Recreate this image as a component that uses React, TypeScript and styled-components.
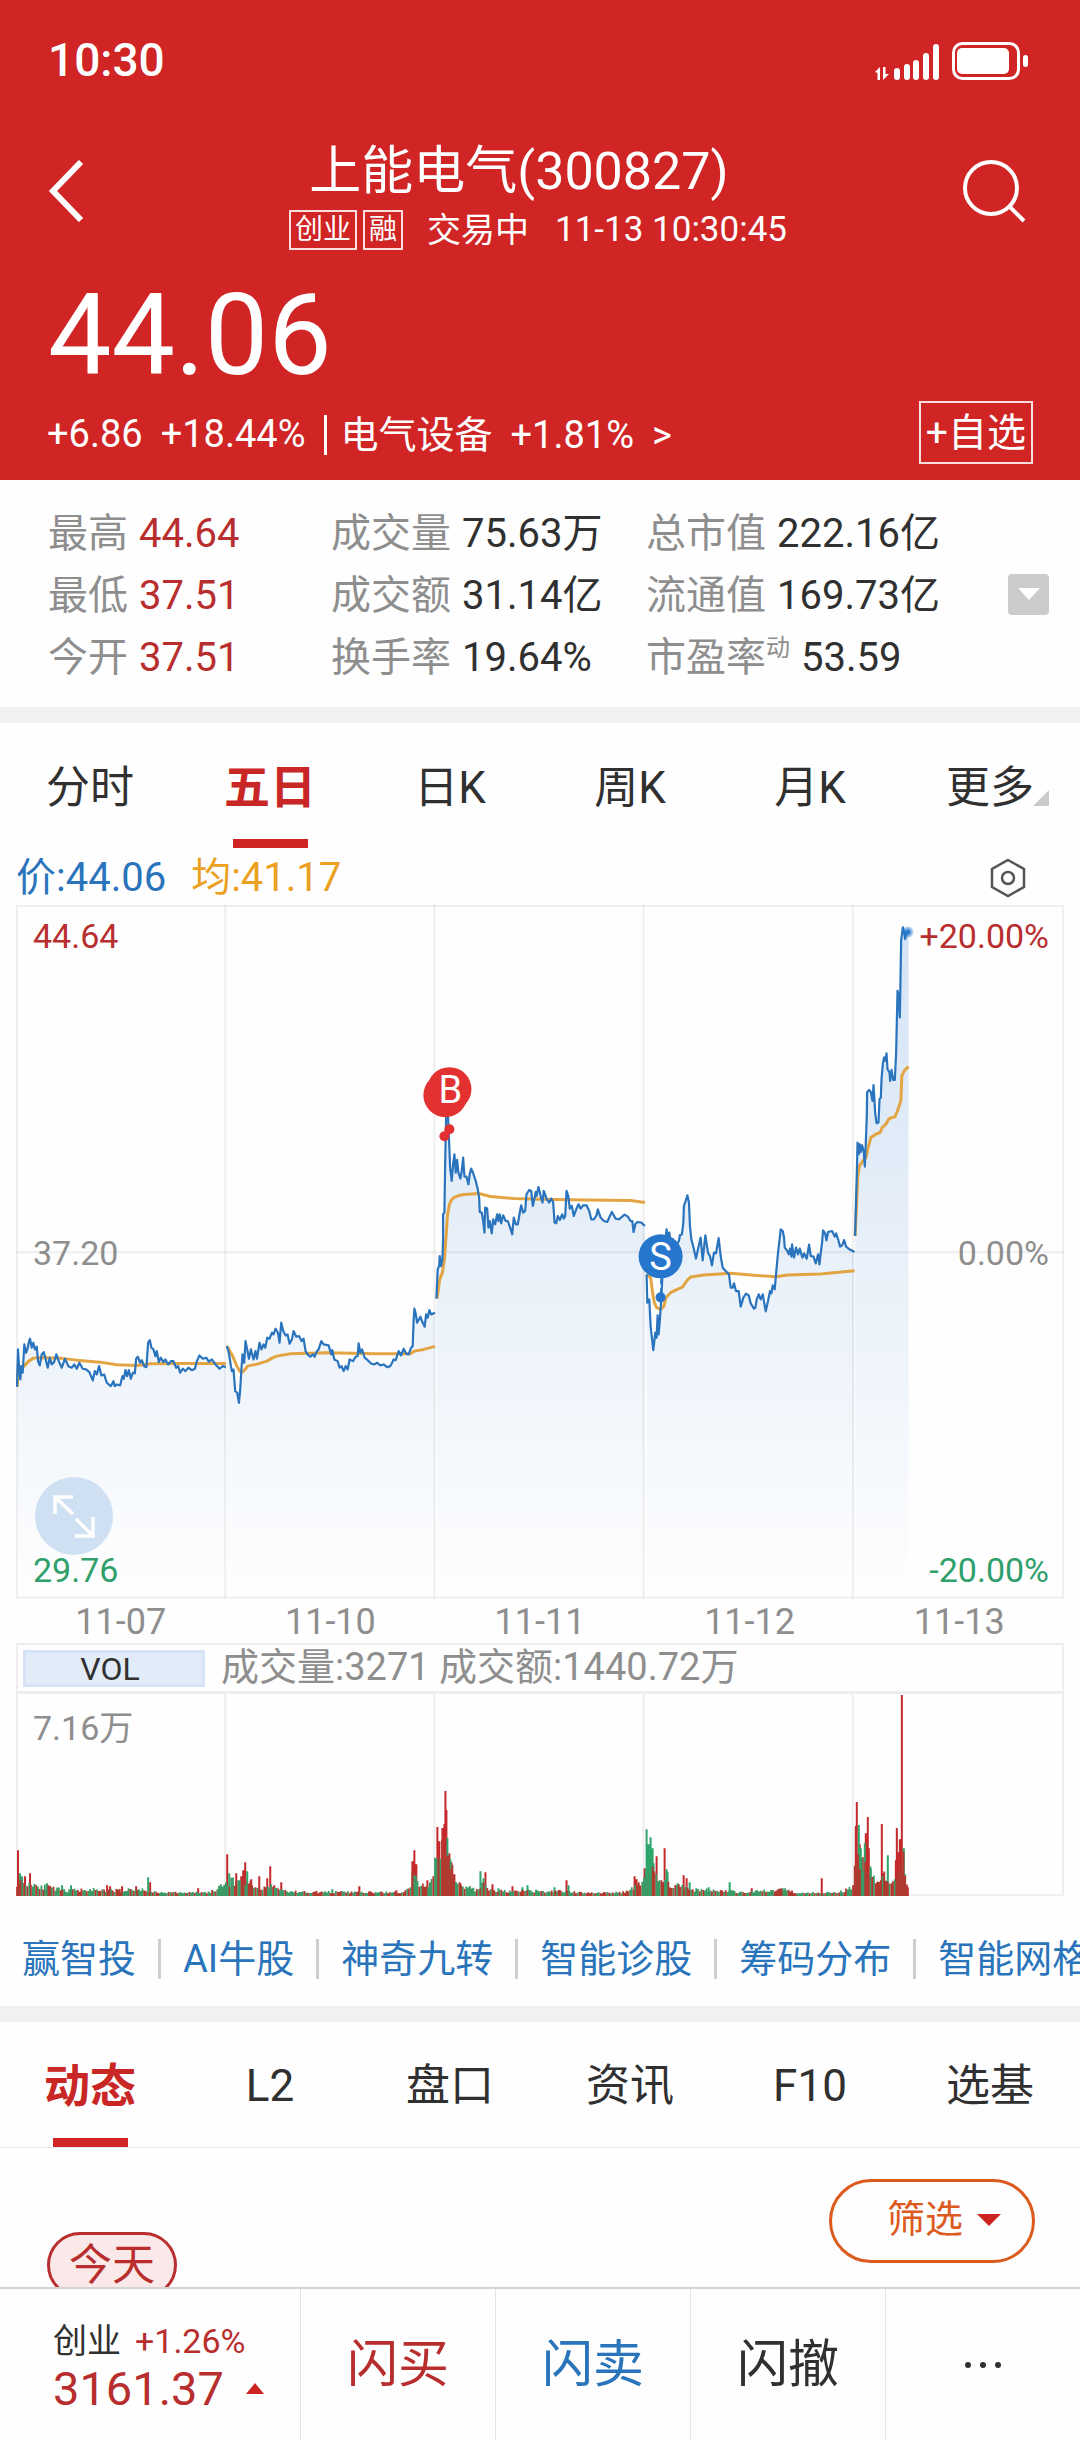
import React from 'react';
import styled, { createGlobalStyle } from 'styled-components';

const RED = '#d02425';
const DEEP_RED = '#b82e2e';
const BLUE = '#2a74bb';
const INK = '#303030';
const GREY = '#8e8e8e';
const LINE = '#eeeeee';

const GlobalStyle = createGlobalStyle`
  * { box-sizing: border-box; }
  body {
    margin: 0;
    background: #fefefe;
    color: ${INK};
    font-family: Roboto, "Noto Sans CJK SC", sans-serif;
    font-size: 40px;
    line-height: 1.2;
  }
  button {
    margin: 0;
    padding: 0;
    border: 0;
    background: none;
    color: inherit;
    font: inherit;
    cursor: pointer;
  }
  a { color: inherit; text-decoration: none; }
`;

const Screen = styled.div`
  display: flex;
  flex-direction: column;
  height: 100vh;
`;

const Scroll = styled.main`
  flex: 1;
  min-height: 0;
  overflow-x: hidden;
  overflow-y: auto;
  scrollbar-width: none;
`;

/* ---------- header ---------- */

const Header = styled.header`
  background: ${RED};
  color: #fff;
  padding-bottom: 16px;
`;

const StatusBar = styled.div`
  display: flex;
  align-items: center;
  justify-content: space-between;
  height: 122px;
  padding: 0 50px 0 48px;
  font-size: 46px;
  font-weight: 500;
`;

const TitleBar = styled.div`
  display: grid;
  grid-template-columns: 1fr auto 1fr;
  align-items: center;
  padding: 20px 52px 8px 48px;
`;

const IconButton = styled.button<{ $end?: boolean }>`
  display: flex;
  justify-self: ${p => (p.$end ? 'end' : 'start')};
  padding-bottom: 10px;
`;

const TitleBlock = styled.div`
  display: flex;
  flex-direction: column;
  gap: 8px;
`;

const Title = styled.h1`
  margin: 0;
  padding-right: 38px;
  font-size: 52px;
  font-weight: 400;
  line-height: 60px;
  text-align: center;
`;

const SubTitle = styled.div`
  display: flex;
  align-items: center;
  gap: 6px;
  font-size: 34px;
  line-height: 40px;
`;

const Badge = styled.span`
  border: 2px solid rgba(255, 255, 255, 0.85);
  padding: 0 4px;
  font-size: 28px;
  line-height: 36px;
`;

const Phase = styled.span`
  margin-left: 18px;
`;

const Clock = styled.time`
  margin-left: 20px;
  font-size: 35px;
`;

const Price = styled.div`
  margin-top: 18px;
  padding: 0 48px;
  font-size: 113px;
  line-height: 120px;
`;

const ChangeRow = styled.div`
  display: flex;
  align-items: center;
  justify-content: space-between;
  margin-top: 5px;
  padding: 0 47px;
  font-size: 38px;
`;

const Changes = styled.div`
  display: flex;
  align-items: center;
  gap: 18px;
  padding-top: 4px;
`;

const Sector = styled.a`
  display: flex;
  gap: 18px;
  padding-left: 14px;
  border-left: 3px solid #fff;
  line-height: 40px;
`;

const WatchButton = styled.button`
  height: 63px;
  padding: 0 5px;
  border: 2px solid rgba(255, 255, 255, 0.85);
  font-size: 39px;
  line-height: 60px;
`;

/* ---------- key figures ---------- */

const Figures = styled.section`
  display: flex;
  align-items: center;
  padding: 19px 31px 18px 48px;
`;

const FigureGrid = styled.dl`
  flex: 1;
  display: grid;
  grid-template-columns: 283fr 315fr 362fr;
  grid-auto-rows: 62px;
  margin: 0;
  padding-top: 4px;
`;

const Figure = styled.div`
  display: flex;
  align-items: center;
  white-space: nowrap;
`;

const FigureName = styled.dt`
  display: flex;
  margin-right: 11px;
  color: ${GREY};
`;

const Superscript = styled.span`
  font-size: 24px;
  line-height: 28px;
`;

const FigureValue = styled.dd<{ $up?: boolean }>`
  margin: 0;
  color: ${p => (p.$up ? DEEP_RED : INK)};
`;

const ExpandButton = styled.button`
  display: flex;
  align-items: center;
  justify-content: center;
  width: 41px;
  height: 41px;
  border-radius: 4px;
  background: #cbcbcb;
`;

const Divider = styled.div`
  height: 16px;
  background: #f1f1f1;
`;

/* ---------- tabs ---------- */

const TabBar = styled.nav<{ $ruled?: boolean }>`
  display: grid;
  grid-template-columns: repeat(6, 1fr);
  height: ${p => (p.$ruled ? 126 : 125)}px;
  border-bottom: ${p => (p.$ruled ? `1px solid #e8e8e8` : '0')};
`;

const Tab = styled.button<{ $active?: boolean }>`
  position: relative;
  display: flex;
  flex-direction: column;
  align-items: center;
  font-size: ${p => (p.$active ? 46 : 44)}px;
  font-weight: ${p => (p.$active ? 700 : 400)};
  color: ${p => (p.$active ? '#c92626' : INK)};

  &::after {
    content: '';
    width: 75px;
    height: 9px;
    background: ${p => (p.$active ? RED : 'transparent')};
  }
`;

const TabLabel = styled.span`
  flex: 1;
  display: flex;
  align-items: center;
  padding-top: 14px;
`;

const TabCorner = styled.svg`
  position: absolute;
  right: 31px;
  bottom: 42px;
`;

/* ---------- chart ---------- */

const Legend = styled.div`
  display: flex;
  align-items: center;
  gap: 25px;
  height: 57px;
  padding: 2px 54px 0 16px;
`;

const LegendItem = styled.span<{ $color: string }>`
  color: ${p => p.$color};
`;

const SettingsButton = styled.button`
  display: flex;
  margin-left: auto;
`;

const ChartArea = styled.section`
  margin: 0 16px;
`;

const Plot = styled.div`
  position: relative;
`;

const Canvas = styled.svg`
  display: block;
  width: 100%;
  height: auto;
`;

const AxisLabels = styled.div<{ $side: 'left' | 'right' }>`
  position: absolute;
  top: 11px;
  bottom: 9px;
  ${p => (p.$side === 'left' ? 'left: 17px;' : 'right: 15px;')}
  display: flex;
  flex-direction: column;
  justify-content: space-between;
  text-align: right;
  font-size: 34px;
  line-height: 40px;
`;

const AxisLabel = styled.span<{ $color: string }>`
  color: ${p => p.$color};
`;

const FullScreenButton = styled.button`
  position: absolute;
  left: 19px;
  bottom: 44px;
  display: flex;
  align-items: center;
  justify-content: center;
  width: 78px;
  height: 78px;
  border-radius: 50%;
  background: #cfe0f3;
`;

const Dates = styled.div`
  display: grid;
  grid-template-columns: repeat(5, 1fr);
  padding-top: 2px;
  color: ${GREY};
  font-size: 36px;
  line-height: 42px;
  text-align: center;
`;

const VolumeBar = styled.div`
  display: flex;
  align-items: center;
  gap: 16px;
  height: 51px;
  padding: 1px 5px 0;
  border: 2px solid ${LINE};
  border-bottom-width: 3px;
  color: ${GREY};
  font-size: 38px;
  white-space: nowrap;
`;

const VolumeButton = styled.button`
  width: 182px;
  height: 37px;
  padding-right: 8px;
  border: 3px solid #d6e3f7;
  background: #e2ebf8;
  color: ${INK};
  font-size: 32px;
  line-height: 32px;
`;

const VolumeMax = styled.span`
  position: absolute;
  left: 17px;
  top: 14px;
  color: ${GREY};
  font-size: 34px;
  line-height: 40px;
`;

/* ---------- quick links ---------- */

const QuickLinks = styled.nav`
  display: flex;
  align-items: center;
  height: 110px;
  padding: 16px 0 0;
  overflow: hidden;
  color: ${BLUE};
  font-size: 38px;
  line-height: 40px;
  white-space: nowrap;
`;

const QuickLink = styled.a`
  flex: none;
  padding: 0 22px;

  & + & {
    border-left: 3px solid #cfcfcf;
  }
`;

/* ---------- feed ---------- */

const Feed = styled.section`
  display: flex;
  justify-content: space-between;
  align-items: flex-start;
  padding: 31px 45px 0 47px;
`;

const Today = styled.h2`
  margin: 53px 0 0;
  padding: 0 19px;
  border: 3px solid ${DEEP_RED};
  border-radius: 36px;
  background: #fbe9e9;
  color: ${DEEP_RED};
  font-size: 43px;
  font-weight: 400;
  line-height: 60px;
`;

const FilterButton = styled.button`
  display: flex;
  align-items: center;
  gap: 14px;
  height: 84px;
  padding: 0 31px 2px 55px;
  border: 3px solid #dc5a1e;
  border-radius: 42px;
  color: #dc5a1e;
  font-size: 38px;
`;

/* ---------- bottom bar ---------- */

const BottomBar = styled.footer`
  display: grid;
  grid-template-columns: 300fr 195fr 195fr 195fr 195fr;
  height: 153px;
  border-top: 2px solid #d4d4d4;
  background: #fefefe;
`;

const IndexLink = styled.a`
  display: flex;
  flex-direction: column;
  justify-content: center;
  padding-left: 53px;
  color: ${DEEP_RED};
  line-height: 48px;
`;

const IndexRow = styled.span<{ $size: number; $gap: number }>`
  display: flex;
  align-items: center;
  gap: ${p => p.$gap}px;
  font-size: ${p => p.$size}px;
`;

const IndexName = styled.span`
  color: ${INK};
`;

const Action = styled.button<{ $color?: string }>`
  display: flex;
  align-items: center;
  justify-content: center;
  border-left: 1px solid #e4e4e4;
  color: ${p => p.$color || INK};
  font-size: 51px;
`;

/* ---------- data ---------- */

const WIDTH = 1047;
const HEIGHT = 693;
const VOLUME_HEIGHT = 202;
const SESSION = 209;

/* Each session holds its samples in thirds of a unit, counted from its own origin. */
type Session = { x: number; y: number; price: string; average: string };

const sessions: Session[] = [
  {
    x: -6,
    y: 394,
    price:
      '21,262 24,150 28,215 31,240 34,200 38,220 43,135 48,160 52,150 56,130 60,118 65,145 70,130 75,150 80,142 84,185 89,198 95,165 101,158 106,175 113,205 119,175 125,195 132,188 139,165 146,185 155,205 165,178 175,200 185,205 193,195 200,208 208,190 218,208 228,210 238,218 248,243 254,215 260,225 267,200 274,228 282,225 290,250 302,260 310,245 314,260 320,255 330,258 337,230 341,238 346,212 351,230 356,212 362,238 368,220 374,222 378,178 383,172 390,190 395,182 402,200 409,203 414,130 419,122 424,145 430,150 436,170 440,155 446,188 452,175 460,188 466,180 474,195 482,185 490,185 498,205 504,200 510,220 518,208 526,215 535,205 545,212 554,208 560,185 568,168 578,178 588,175 596,187 605,180 616,195 628,208 638,200 647,203',
    average:
      '22,262 25,195 30,208 42,200 56,185 70,176 90,174 150,176 200,182 270,188 320,196 380,198 420,193 500,192 647,192',
  },
  {
    x: -6,
    y: 394,
    price:
      '650,140 656,160 662,200 665,215 670,210 675,275 681,280 686,310 690,270 694,205 697,165 702,190 706,125 712,155 716,178 722,150 730,180 736,155 740,178 748,130 754,150 760,135 765,145 771,115 778,118 785,100 790,105 796,88 803,100 808,130 813,70 819,95 826,108 832,105 838,133 845,120 850,95 858,112 866,110 874,125 880,118 886,155 892,165 900,172 908,165 913,172 920,155 925,150 933,125 940,135 955,138 963,165 966,152 972,180 982,185 988,205 994,200 1000,215 1006,200 1012,210 1018,180 1028,185 1036,172 1042,170 1045,132 1050,160 1055,150 1063,175 1072,182 1082,192 1092,195 1100,190 1110,198 1120,195 1130,203 1140,200 1150,180 1156,182 1165,155 1172,168 1180,148 1187,162 1195,165 1202,145 1207,140 1210,60 1212,28 1216,42 1220,70 1230,52 1236,68 1243,82 1247,45 1252,55 1257,32 1262,45 1274,40',
    average:
      '650,140 665,165 680,200 688,214 694,220 705,210 712,200 740,194 770,185 785,176 800,170 840,163 950,160 1100,163 1200,163 1212,155 1240,150 1274,141',
  },
  {
    x: 384,
    y: 134,
    price:
      '108,778 112,690 116,680 118,650 122,680 126,660 128,600 128,525 132,520 134,380 137,235 143,235 147,330 149,385 154,425 158,375 162,345 166,400 170,362 174,400 180,418 184,395 188,355 192,412 198,412 204,435 208,405 212,388 218,402 226,425 232,450 236,475 238,518 244,520 248,545 252,580 254,505 260,508 264,565 268,545 274,582 278,540 284,555 290,525 294,545 298,525 302,552 308,528 316,545 322,545 330,568 335,585 340,535 346,555 352,555 356,530 362,498 368,520 374,515 378,465 386,452 392,455 397,500 402,478 406,458 408,470 414,443 420,468 426,490 430,455 438,478 446,490 452,478 458,490 462,550 467,552 472,530 478,542 485,525 490,538 494,530 498,455 503,470 508,508 514,500 520,530 527,510 534,495 540,508 548,498 558,498 566,515 572,540 580,540 588,528 592,510 600,535 610,545 620,548 628,530 634,518 645,538 655,540 672,526 682,532 690,545 695,545 699,578 704,555 710,548 722,550 733,560',
    average:
      '110,778 118,720 126,700 132,660 137,590 141,530 147,495 152,484 160,475 175,469 190,466 235,463 270,472 340,478 420,480 560,482 690,484 733,490',
  },
  {
    x: 604,
    y: 254,
    price:
      '78,345 80,430 86,420 90,500 98,572 104,520 108,535 111,468 114,525 118,480 122,415 126,340 132,260 138,210 141,232 146,220 150,250 156,240 166,260 175,245 178,228 184,225 188,190 190,140 195,125 200,108 205,130 208,200 212,240 220,270 226,298 232,270 240,235 246,303 254,228 262,280 268,290 274,318 280,280 286,282 294,236 300,290 306,325 318,338 325,345 330,385 336,385 340,372 346,395 354,395 360,442 368,415 376,403 384,408 390,432 400,448 404,445 408,420 414,405 420,420 426,405 435,456 442,425 448,395 452,402 456,378 462,390 466,345 472,280 476,245 480,210 486,215 490,235 492,265 498,272 504,285 508,268 512,292 514,255 520,295 526,265 532,285 537,268 545,295 550,282 558,298 565,256 570,290 578,292 585,312 592,285 596,315 600,280 604,250 607,213 613,222 617,243 622,218 634,215 642,232 646,222 652,240 658,262 664,258 670,242 676,262 686,270 701,278',
    average:
      '78,345 90,355 96,400 101,430 108,445 120,450 130,440 136,415 150,400 165,392 185,383 200,362 210,353 250,347 330,342 400,348 466,352 500,347 600,344 701,334',
  },
  {
    x: 824,
    y: 4,
    price:
      '43,980 46,870 49,760 50,700 54,735 57,705 60,728 64,708 69,728 72,772 75,700 78,620 79,550 85,542 90,548 95,575 98,528 101,575 103,610 107,642 113,640 116,570 120,565 122,510 126,465 130,445 134,455 137,433 140,480 146,490 148,515 152,482 157,512 162,512 166,430 170,245 173,262 177,325 179,200 181,95 186,55 190,68 193,90 197,70 203,70',
    average:
      '43,980 48,870 51,800 56,770 68,752 76,745 82,715 90,685 105,675 118,670 124,655 135,645 145,628 162,623 170,605 180,575 183,500 190,485 203,472',
  },
];

const toPoints = (s: Session, key: 'price' | 'average') =>
  s[key].split(' ').map(pair => {
    const [x, y] = pair.split(',').map(Number);
    return [(s.x + x / 3).toFixed(1), (s.y + y / 3).toFixed(1)];
  });

const toLine = (points: string[][]) => 'M' + points.map(p => p.join(' ')).join('L');

const toArea = (points: string[][]) =>
  `${toLine(points)}V${HEIGHT}H${points[0][0]}Z`;

/* Typical turnover along the axis, then the single peaks: position, height, rising. */
const turnover: [number, number][] = [
  [0, 16], [10, 15], [20, 13], [35, 9], [50, 6], [75, 8], [82, 6], [115, 7], [125, 8], [130, 5],
  [150, 4], [190, 4], [200, 7], [209, 14], [220, 18], [230, 18], [240, 9], [255, 11], [262, 8],
  [275, 5], [385, 4], [393, 8], [396, 22], [400, 20], [402, 9], [407, 12], [416, 16], [418, 48],
  [431, 52], [438, 22], [445, 13], [455, 9], [460, 6], [466, 15], [471, 8], [480, 6], [500, 5],
  [512, 6], [530, 5], [545, 6], [560, 4], [600, 4], [612, 6], [618, 12], [626, 16], [628, 28],
  [637, 27], [642, 18], [652, 14], [660, 12], [675, 8], [700, 6], [712, 6], [725, 4], [762, 7],
  [768, 8], [780, 4], [800, 4], [825, 5], [836, 10], [838, 40], [848, 40], [854, 27], [862, 15],
  [868, 22], [875, 12], [879, 20], [883, 42], [887, 40], [890, 11], [892, 8],
];

const peaks: [number, number, 0 | 1][] = [
  [2, 46, 1], [4, 23, 0], [6, 20, 0], [9, 20, 1], [14, 23, 1], [31, 13, 0], [46, 11, 0], [55, 11, 0],
  [91, 11, 1], [94, 10, 1], [106, 10, 1], [120, 10, 1], [132, 19, 0], [134, 14, 1], [182, 8, 1],
  [211, 42, 1], [213, 23, 0], [220, 23, 1], [225, 20, 1], [227, 26, 1], [229, 34, 1], [231, 25, 0],
  [235, 17, 1], [243, 20, 1], [251, 18, 1], [254, 30, 1], [258, 11, 1], [265, 14, 1], [316, 7, 0],
  [343, 10, 1], [380, 6, 1], [396, 35, 1], [398, 46, 1], [400, 32, 1], [411, 16, 1], [421, 69, 1],
  [423, 55, 1], [426, 68, 1], [428, 72, 1], [429, 105, 1], [430, 86, 1], [431, 58, 0], [433, 43, 1],
  [434, 37, 0], [435, 34, 1], [437, 22, 1], [438, 22, 1], [444, 13, 1], [464, 25, 0], [467, 18, 0],
  [469, 24, 1], [476, 12, 1], [482, 8, 0], [496, 10, 1], [506, 9, 0], [511, 11, 0], [538, 9, 0],
  [550, 16, 1], [552, 11, 0], [618, 20, 1], [620, 17, 1], [628, 28, 1], [630, 67, 0], [632, 52, 0],
  [634, 59, 0], [636, 48, 0], [637, 33, 0], [640, 40, 1], [648, 48, 1], [650, 27, 0], [651, 24, 0],
  [661, 13, 0], [667, 21, 1], [670, 18, 1], [673, 14, 0], [692, 9, 0], [713, 14, 0], [735, 8, 1],
  [766, 8, 0], [805, 18, 1], [839, 70, 1], [840, 94, 1], [842, 71, 0], [843, 52, 1], [844, 48, 0],
  [846, 39, 1], [848, 53, 0], [849, 63, 1], [851, 79, 1], [852, 48, 1], [854, 28, 0], [865, 72, 1],
  [867, 23, 1], [871, 41, 0], [879, 36, 1], [880, 68, 1], [881, 44, 1], [883, 57, 1], [885, 201, 1],
  [887, 48, 0], [888, 22, 0], [891, 9, 1],
];

const levelAt = (x: number) => {
  const next = turnover.findIndex(([px]) => px >= x);
  if (next <= 0) return turnover[0][1];
  const [x0, y0] = turnover[next - 1];
  const [x1, y1] = turnover[next];
  return y0 + ((y1 - y0) * (x - x0)) / (x1 - x0);
};

const buildVolume = () => {
  const bars = { up: '', down: '', peakUp: '', peakDown: '' };
  let seed = 11;
  const random = () => {
    seed = (seed * 16807) % 2147483647;
    return seed / 2147483647;
  };
  /* The opening and closing surges are mostly buying, the 11-12 opening mostly selling. */
  const buying = (x: number) => {
    if ((x > 416 && x < 440) || x > 836) return 0.7;
    if (x > 627 && x < 640) return 0.15;
    return 0.45;
  };
  for (let x = 1; x < 891; x += 1.74) {
    const h = Math.max(3, levelAt(x) * (0.6 + random() * 0.55));
    const key = random() < buying(x) ? 'up' : 'down';
    bars[key] += `M${x.toFixed(1)} ${VOLUME_HEIGHT}v${(-h).toFixed(1)}`;
  }
  peaks.forEach(([x, h, up]) => {
    bars[up ? 'peakUp' : 'peakDown'] += `M${x} ${VOLUME_HEIGHT}v${-h}`;
  });
  return bars;
};

const volume = buildVolume();

const figures = [
  { name: '最高', value: '44.64', up: true },
  { name: '成交量', value: '75.63万' },
  { name: '总市值', value: '222.16亿' },
  { name: '最低', value: '37.51', up: true },
  { name: '成交额', value: '31.14亿' },
  { name: '流通值', value: '169.73亿' },
  { name: '今开', value: '37.51', up: true },
  { name: '换手率', value: '19.64%' },
  { name: '市盈率', note: '动', value: '53.59' },
];

const periods = ['分时', '五日', '日K', '周K', '月K', '更多'];
const pages = ['动态', 'L2', '盘口', '资讯', 'F10', '选基'];
const dates = ['11-07', '11-10', '11-11', '11-12', '11-13'];
const links = ['赢智投', 'AI牛股', '神奇九转', '智能诊股', '筹码分布', '智能网格'];

/* ---------- drawings ---------- */

const SignalAndBattery = () => (
  <svg width="156" height="40" viewBox="0 0 156 40" fill="#fff" aria-hidden="true">
    <path d="M1 31l5-5v13H3.500v-7zM9 26h2.500v7H15l-6 6z" />
    <rect x="20" y="27" width="6" height="12" rx="3" />
    <rect x="30" y="23" width="6" height="16" rx="3" />
    <rect x="39" y="19" width="6" height="20" rx="3" />
    <rect x="49" y="12" width="6" height="27" rx="3" />
    <rect x="59" y="3" width="6" height="36" rx="3" />
    <rect x="79.500" y="2.500" width="65" height="35" rx="9" fill="none" stroke="#fff" strokeWidth="3" />
    <rect x="83" y="7" width="52" height="26" rx="5" />
    <rect x="149" y="14" width="5" height="12" rx="2.500" />
  </svg>
);

const BackIcon = () => (
  <svg width="36" height="62" viewBox="0 0 36 62" fill="none" stroke="#fff" strokeWidth="6" aria-hidden="true">
    <path d="M33 2L5 31l28 29" />
  </svg>
);

const SearchIcon = () => (
  <svg width="66" height="66" viewBox="0 0 66 66" fill="none" stroke="#fff" strokeWidth="4" aria-hidden="true">
    <circle cx="29" cy="30" r="26" />
    <path d="M47 48l15 15" />
  </svg>
);

const Triangle = ({ width, height, color, up }: { width: number; height: number; color: string; up?: boolean }) => (
  <svg width={width} height={height} viewBox="0 0 10 10" preserveAspectRatio="none" fill={color} aria-hidden="true">
    <path d={up ? 'M0 10h10L5 0z' : 'M0 0h10L5 10z'} />
  </svg>
);

const HexIcon = () => (
  <svg width="36" height="40" viewBox="0 0 36 40" fill="none" stroke="#555" strokeWidth="2.500" aria-hidden="true">
    <path d="M18 2l16 9v18l-16 9-16-9V11z" />
    <circle cx="18" cy="20" r="6" />
  </svg>
);

const FullScreenIcon = () => (
  <svg width="44" height="44" viewBox="0 0 44 44" fill="none" stroke="#fff" strokeWidth="3.500" aria-hidden="true">
    <path d="M3 20V3h18M3 3l18 17M24 25l17 17M41 23v19H23" />
  </svg>
);

const PriceChart = () => (
  <Canvas viewBox={`0 0 ${WIDTH} ${HEIGHT}`} role="img" aria-label="五日走势">
    <defs>
      <linearGradient id="fade" gradientUnits="userSpaceOnUse" x1="0" y1="0" x2="0" y2={HEIGHT}>
        <stop offset="0" stopColor="#d2e2f5" />
        <stop offset="0.500" stopColor="#e8f0f9" />
        <stop offset="0.750" stopColor="#f3f7fc" />
        <stop offset="1" stopColor="#fefefe" />
      </linearGradient>
      <radialGradient id="glow">
        <stop offset="0.200" stopColor="#2576cc" />
        <stop offset="1" stopColor="#2576cc" stopOpacity="0.100" />
      </radialGradient>
    </defs>
    {sessions.map((s, i) => (
      <path key={i} d={toArea(toPoints(s, 'price'))} fill="url(#fade)" />
    ))}
    <g fill="none" stroke="#000" strokeOpacity="0.060" strokeWidth="2">
      <rect x="1" y="1" width={WIDTH - 2} height={HEIGHT - 2} />
      <path d={`M0 347H${WIDTH}`} />
      {[1, 2, 3, 4].map(n => (
        <path key={n} d={`M${n * SESSION} 0V${HEIGHT}`} />
      ))}
    </g>
    {sessions.map((s, i) => (
      <g key={i} fill="none" strokeLinejoin="round">
        <path d={toLine(toPoints(s, 'average'))} stroke="#e3a544" strokeWidth="3" />
        <path d={toLine(toPoints(s, 'price'))} stroke="#2a74bd" strokeWidth="2.200" />
      </g>
    ))}
    <circle cx="891" cy="27" r="6" fill="url(#glow)" />
    <g fill="#e33131">
      <circle cx="433" cy="184" r="22" />
      <circle cx="429" cy="190" r="22" />
      <circle cx="433" cy="224" r="5" />
      <circle cx="428" cy="231" r="5" />
    </g>
    <g fill="#2576cc">
      <circle cx="644" cy="351" r="22" />
      <circle cx="644" cy="392" r="5" />
    </g>
    <path d="M644 373v16" stroke="#2576cc" strokeDasharray="6 4" />
    <g fill="#fff" fontSize="38" textAnchor="middle">
      <text x="434" y="198">B</text>
      <text x="644" y="365">S</text>
    </g>
  </Canvas>
);

const VolumeChart = () => (
  <Canvas viewBox={`0 0 ${WIDTH} ${VOLUME_HEIGHT}`} role="img" aria-label="成交量走势">
    <g fill="none" stroke={LINE} strokeWidth="2">
      <path d={`M1 0V${VOLUME_HEIGHT - 1}H${WIDTH - 1}V0`} />
      {[1, 2, 3, 4].map(n => (
        <path key={n} d={`M${n * SESSION} 0V${VOLUME_HEIGHT}`} />
      ))}
    </g>
    <path d={volume.peakUp} stroke="#c42a2b" strokeWidth="2" />
    <path d={volume.peakDown} stroke="#2fa56c" strokeWidth="2" />
    <path d={volume.down} stroke="#3c9a67" strokeWidth="1.800" />
    <path d={volume.up} stroke="#b03a30" strokeWidth="1.800" />
  </Canvas>
);

/* ---------- page ---------- */

export default function App() {
  return (
    <Screen>
      <GlobalStyle />
      <Scroll>
        <Header>
          <StatusBar>
            <time>10:30</time>
            <SignalAndBattery />
          </StatusBar>
          <TitleBar>
            <IconButton type="button" aria-label="返回"><BackIcon /></IconButton>
            <TitleBlock>
              <Title>上能电气(300827)</Title>
              <SubTitle>
                <Badge>创业</Badge>
                <Badge>融</Badge>
                <Phase>交易中</Phase>
                <Clock>11-13 10:30:45</Clock>
              </SubTitle>
            </TitleBlock>
            <IconButton type="button" aria-label="搜索" $end><SearchIcon /></IconButton>
          </TitleBar>
          <Price>44.06</Price>
          <ChangeRow>
            <Changes>
              <span>+6.86</span>
              <span>+18.44%</span>
              <Sector href="#sector">
                <span>电气设备</span>
                <span>+1.81%</span>
                <span>&gt;</span>
              </Sector>
            </Changes>
            <WatchButton type="button">+自选</WatchButton>
          </ChangeRow>
        </Header>

        <Figures>
          <FigureGrid>
            {figures.map(f => (
              <Figure key={f.name}>
                <FigureName>
                  {f.name}
                  {f.note && <Superscript>{f.note}</Superscript>}
                </FigureName>
                <FigureValue $up={f.up}>{f.value}</FigureValue>
              </Figure>
            ))}
          </FigureGrid>
          <ExpandButton type="button" aria-label="展开">
            <Triangle width={22} height={12} color="#fff" />
          </ExpandButton>
        </Figures>
        <Divider />

        <TabBar>
          {periods.map(p => (
            <Tab key={p} type="button" $active={p === '五日'}>
              <TabLabel>{p}</TabLabel>
              {p === '更多' && (
                <TabCorner width="16" height="16" viewBox="0 0 16 16" fill="#cbcbcb" aria-hidden="true">
                  <path d="M16 0v16H0z" />
                </TabCorner>
              )}
            </Tab>
          ))}
        </TabBar>

        <Legend>
          <LegendItem $color={BLUE}>价:44.06</LegendItem>
          <LegendItem $color="#eba11f">均:41.17</LegendItem>
          <SettingsButton type="button" aria-label="设置"><HexIcon /></SettingsButton>
        </Legend>

        <ChartArea>
          <Plot>
            <PriceChart />
            <AxisLabels $side="left">
              <AxisLabel $color={DEEP_RED}>44.64</AxisLabel>
              <AxisLabel $color={GREY}>37.20</AxisLabel>
              <AxisLabel $color="#2f9f6c">29.76</AxisLabel>
            </AxisLabels>
            <AxisLabels $side="right">
              <AxisLabel $color={DEEP_RED}>+20.00%</AxisLabel>
              <AxisLabel $color={GREY}>0.00%</AxisLabel>
              <AxisLabel $color="#2f9f6c">-20.00%</AxisLabel>
            </AxisLabels>
            <FullScreenButton type="button" aria-label="全屏"><FullScreenIcon /></FullScreenButton>
          </Plot>
          <Dates>
            {dates.map(d => <span key={d}>{d}</span>)}
          </Dates>
          <VolumeBar>
            <VolumeButton type="button">VOL</VolumeButton>
            <span>成交量:3271 成交额:1440.72万</span>
          </VolumeBar>
          <Plot>
            <VolumeChart />
            <VolumeMax>7.16万</VolumeMax>
          </Plot>
        </ChartArea>

        <QuickLinks>
          {links.map(l => <QuickLink key={l} href="#tool">{l}</QuickLink>)}
        </QuickLinks>
        <Divider />

        <TabBar $ruled>
          {pages.map(p => (
            <Tab key={p} type="button" $active={p === '动态'}>
              <TabLabel>{p}</TabLabel>
            </Tab>
          ))}
        </TabBar>

        <Feed>
          <Today>今天</Today>
          <FilterButton type="button">
            筛选
            <Triangle width={24} height={12} color="#cc2222" />
          </FilterButton>
        </Feed>
      </Scroll>

      <BottomBar>
        <IndexLink href="#index">
          <IndexRow $size={34} $gap={14}>
            <IndexName>创业</IndexName>
            +1.26%
          </IndexRow>
          <IndexRow $size={47} $gap={22}>
            3161.37
            <Triangle width={18} height={11} color="#cc2222" up />
          </IndexRow>
        </IndexLink>
        <Action type="button" $color={DEEP_RED}>闪买</Action>
        <Action type="button" $color={BLUE}>闪卖</Action>
        <Action type="button">闪撤</Action>
        <Action type="button" aria-label="更多操作">
          <svg width="36" height="6" viewBox="0 0 36 6" fill={INK} aria-hidden="true">
            <circle cx="3" cy="3" r="3" />
            <circle cx="18" cy="3" r="3" />
            <circle cx="33" cy="3" r="3" />
          </svg>
        </Action>
      </BottomBar>
    </Screen>
  );
}
